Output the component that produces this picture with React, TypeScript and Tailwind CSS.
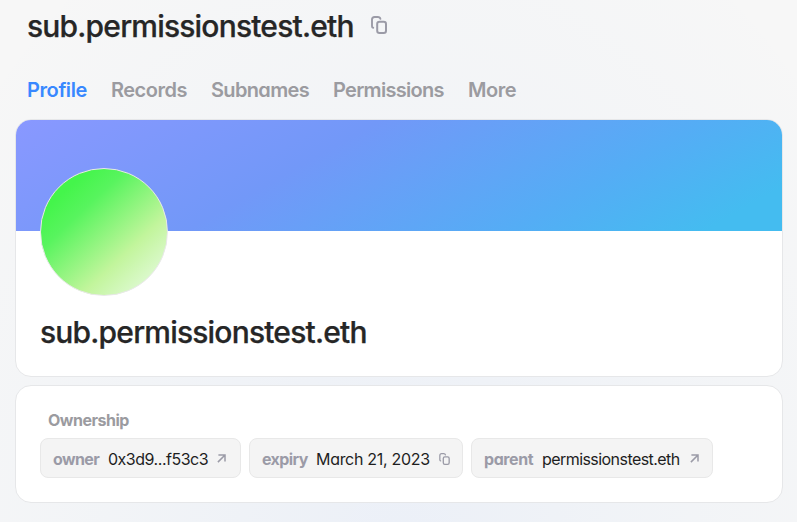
import type { ReactNode } from "react";

function CopyIcon({ className }: { className: string }) {
  return (
    <svg viewBox="0 0 16 18" fill="none" stroke="#9b9ba7" className={className}>
      <path d="M2.2 11.8 Q1 11.6 1 10.2 V3.6 Q1 1 3.6 1 H6.8 Q9 1 9.4 2.9" strokeWidth="1.9" strokeLinecap="round" />
      <rect x="6.2" y="5.8" width="8.8" height="11.2" rx="2.3" strokeWidth="2" />
    </svg>
  );
}

function ArrowIcon() {
  return (
    <svg viewBox="0 0 9 9" fill="none" stroke="#9b9ba7" strokeWidth="1.5" className="size-[9px] shrink-0">
      <path d="M1.4 1 H8 V7.4 M8 1 L.9 8.1" />
    </svg>
  );
}

function Chip({
  className,
  label,
  labelClass,
  value,
  valueClass,
  icon,
}: {
  className: string;
  label: string;
  labelClass: string;
  value: string;
  valueClass: string;
  icon: ReactNode;
}) {
  return (
    <div className={`flex h-10 items-center rounded-lg border border-[#e8e8e8] bg-[#f4f4f4] pl-3 ${className}`}>
      <span className={`shrink-0 pt-0.5 font-bold text-[#9b9ba7] ${labelClass}`}>{label}</span>
      <span className={`shrink-0 pt-0.5 text-[#1e1e1e] ${valueClass}`}>{value}</span>
      {icon}
    </div>
  );
}

const tabs = [
  { name: "Profile", style: "w-[84px] tracking-[-0.4px] text-[#3888ff]" },
  { name: "Records", style: "w-[100px] tracking-[-0.5px] text-[#9b9ba0]" },
  { name: "Subnames", style: "w-[122px] tracking-[-0.65px] text-[#9b9ba0]" },
  { name: "Permissions", style: "w-[135px] tracking-[-0.7px] text-[#9b9ba0]" },
  { name: "More", style: "w-[50px] tracking-[-0.5px] text-[#9b9ba0]" },
];

export default function App() {
  return (
    <div className="h-[522px] w-[797px] overflow-hidden whitespace-nowrap bg-[#f7f7f7] bg-[radial-gradient(ellipse_480px_640px_at_400px_560px,rgba(82,142,255,0.07)_0%,rgba(82,152,255,0.032)_60%,rgba(82,152,255,0)_115%)] pl-[15px] font-['Inter',sans-serif] [font-feature-settings:'cv11']">
      <header className="flex h-[52px] items-center pl-3">
        <h1 className="w-[344px] text-[30px] font-medium leading-[52px] tracking-[-0.81px] text-[#262626] [-webkit-text-stroke:0.25px_#262626]">sub.permissionstest.eth</h1>
        <CopyIcon className="mb-0.5 h-[18px] w-4" />
      </header>
      <nav className="flex h-[67px] pl-3 pt-[23px] text-[20px] font-semibold leading-[30px]">
        {tabs.map((tab) => (
          <a key={tab.name} className={`shrink-0 ${tab.style}`}>{tab.name}</a>
        ))}
      </nav>
      <main className="flex w-[768px] flex-col gap-2">
        <section className="h-[258px] overflow-hidden rounded-2xl border border-[#e6e7e9] bg-white">
          <div className="h-[111px] bg-[linear-gradient(330.4deg,#44bcf0_8%,#54adf5_28%,#7298f8_62%,#8998ff_100%)] pl-6 pt-12">
            <div className="size-32 rounded-full border border-[#e8e8e8] bg-[linear-gradient(137deg,#44f54b_18%,#58f45e_33%,#c2f59c_67%,#e3fadb_92%)]" />
          </div>
          <h2 className="pl-6 pt-[78px] text-[30px] font-medium leading-[47px] tracking-[-0.81px] text-[#262626] [-webkit-text-stroke:0.25px_#262626]">sub.permissionstest.eth</h2>
        </section>
        <section className="h-[118px] rounded-2xl border border-[#e6e7e9] bg-white pl-6 pt-[22px]">
          <h3 className="h-[30px] pl-2 text-[16px] font-bold leading-6 tracking-[-0.48px] text-[#9b9ba0]">Ownership</h3>
          <div className="flex gap-2 text-[16px]">
            <Chip className="w-[201px]" label="owner" labelClass="w-[55px] tracking-[-0.6px]" value="0x3d9...f53c3" valueClass="w-[109px] tracking-[-0.48px]" icon={<ArrowIcon />} />
            <Chip className="w-[214px]" label="expiry" labelClass="w-[54px] tracking-[-0.6px]" value="March 21, 2023" valueClass="w-[123px] tracking-[-0.3px]" icon={<CopyIcon className="mt-0.5 h-3 w-[11px] shrink-0" />} />
            <Chip className="w-[242px]" label="parent" labelClass="w-[58px] tracking-[-0.4px]" value="permissionstest.eth" valueClass="w-[148px] tracking-[-0.56px]" icon={<ArrowIcon />} />
          </div>
        </section>
      </main>
    </div>
  );
}
